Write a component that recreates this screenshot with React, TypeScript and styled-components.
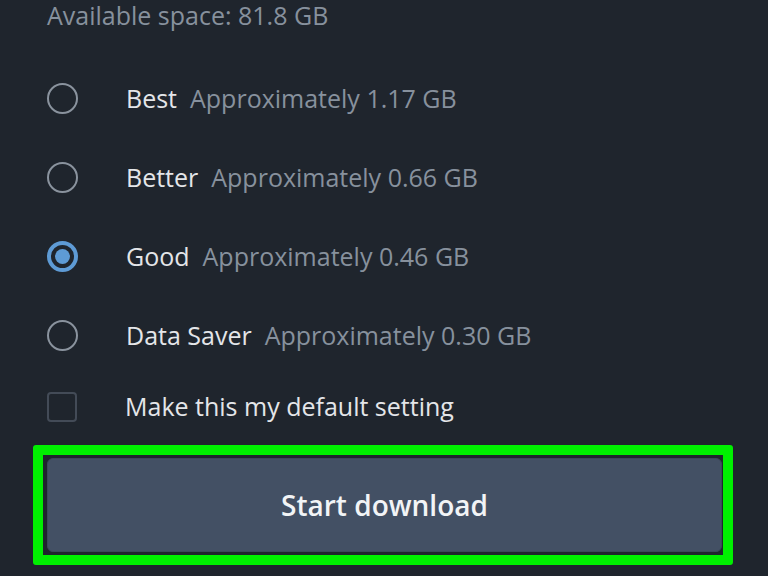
import React, { useState } from "react";
import styled, { createGlobalStyle } from "styled-components";

const Global = createGlobalStyle`
  html, body { margin: 0; padding: 0; background: #1f252d; }
  body { width: 768px; height: 576px; overflow: hidden; font-family: "Open Sans", "Noto Sans", sans-serif; }
`;

const Page = styled.div`
  width: 768px;
  height: 576px;
  background: #1f252d;
  display: flex;
  flex-direction: column;
  box-sizing: border-box;
`;

const Available = styled.div`
  padding-left: 47px;
  height: 30px;
  line-height: 30px;
  font-size: 25px;
  color: #87919d;
  margin-bottom: 29px;
`;

const Options = styled.div`
  display: flex;
  flex-direction: column;
  padding-left: 47px;
`;

const Row = styled.label`
  display: flex;
  align-items: center;
  height: 79px;
  cursor: pointer;
`;

const CheckRow = styled(Row)`
  height: 64px;
`;

const Radio = styled.span<{ $on: boolean }>`
  width: 31px;
  height: 31px;
  box-sizing: border-box;
  border-radius: 50%;
  border: ${(p) => (p.$on ? "4px solid #5e9bd5" : "2px solid #8a939e")};
  display: flex;
  align-items: center;
  justify-content: center;
  flex: none;
  &::after {
    content: "";
    display: ${(p) => (p.$on ? "block" : "none")};
    width: 15px;
    height: 15px;
    border-radius: 50%;
    background: #5e9bd5;
  }
`;

const Box = styled.span`
  width: 30px;
  height: 30px;
  box-sizing: border-box;
  border: 2px solid #434b57;
  border-radius: 4px;
  flex: none;
`;

const Text = styled.span`
  font-size: 25px;
  line-height: 32px;
  position: relative;
  top: -1px;
`;

const Label = styled(Text)`
  margin-left: 48px;
  color: #e4e6e9;
`;

const Desc = styled(Text)`
  margin-left: 13px;
  color: #87919d;
`;

const Frame = styled.div`
  margin: 6px 0 0 33px;
  width: 700px;
  height: 120px;
  box-sizing: border-box;
  border: 10px solid #00f000;
  border-radius: 3px;
  padding: 3px 1px 3px 4px;
  display: flex;
`;

const Button = styled.button`
  flex: 1;
  background: #435064;
  border: 1px solid #3c485a;
  border-radius: 6px;
  color: #f2f4f6;
  font-family: "Open Sans", "Noto Sans", sans-serif;
  font-size: 28px;
  font-weight: 600;
  cursor: pointer;
`;

const options = [
  { name: "Best", size: "1.17" },
  { name: "Better", size: "0.66" },
  { name: "Good", size: "0.46" },
  { name: "Data Saver", size: "0.30" },
];

export default function App() {
  const [sel, setSel] = useState(2);
  return (
    <Page>
      <Global />
      <Available>Available space: 81.8 GB</Available>
      <Options>
        {options.map((o, i) => (
          <Row key={o.name} onClick={() => setSel(i)}>
            <Radio $on={sel === i} />
            <Label>{o.name}</Label>
            <Desc>Approximately {o.size} GB</Desc>
          </Row>
        ))}
        <CheckRow>
          <Box />
          <Label>Make this my default setting</Label>
        </CheckRow>
      </Options>
      <Frame>
        <Button>Start download</Button>
      </Frame>
    </Page>
  );
}
